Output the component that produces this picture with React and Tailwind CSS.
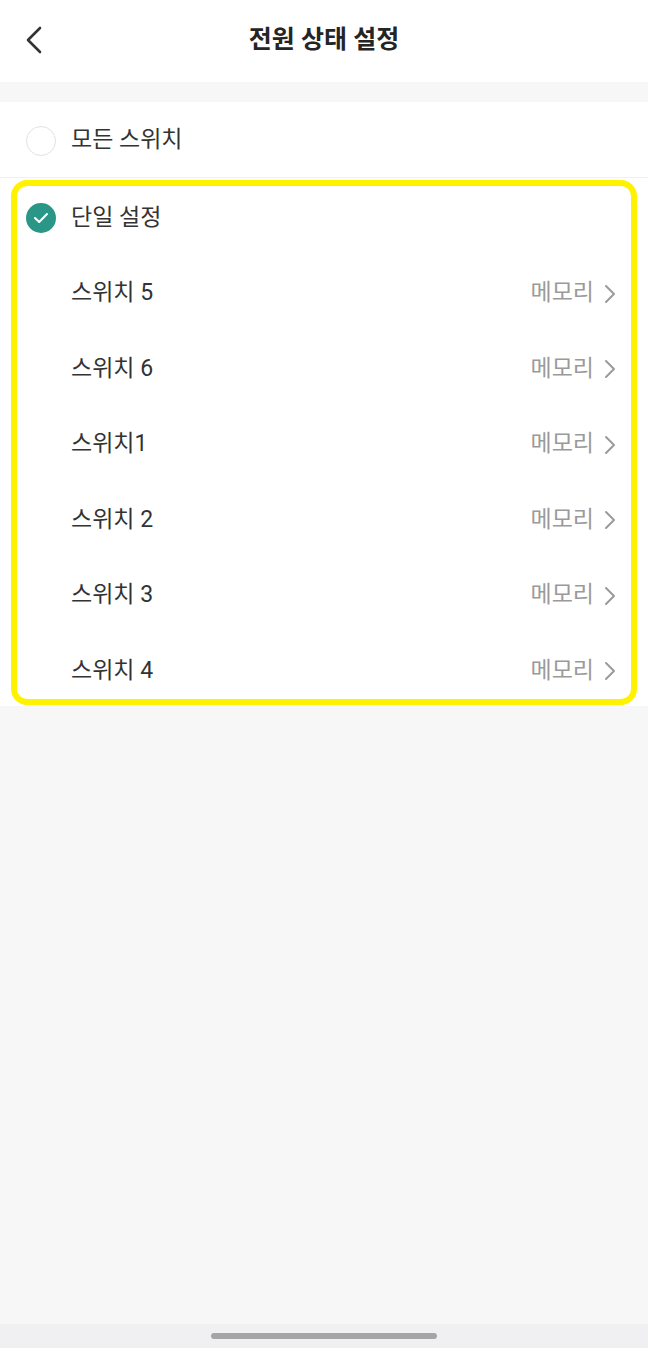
import React from "react";

const Chevron = () => (
  <svg width="12" height="20" viewBox="0 0 12 20" fill="none">
    <path d="M2 2 L10 10 L2 18" stroke="#9a9a9a" strokeWidth="2" strokeLinecap="round" strokeLinejoin="round" />
  </svg>
);

const rows = ["스위치 5", "스위치 6", "스위치1", "스위치 2", "스위치 3", "스위치 4"];

export default function App() {
  return (
    <div
      className="flex h-screen flex-col bg-[#f7f7f7]"
      style={{ fontFamily: 'Roboto, "Noto Sans CJK KR", sans-serif' }}
    >
      <header className="grid h-[82px] grid-cols-[1fr_auto_1fr] items-center bg-white">
        <div className="pl-[24px] pb-[3px]">
          <svg width="20" height="28" viewBox="0 0 20 28" fill="none">
            <path d="M16 2 L4 14 L16 26" stroke="#333" strokeWidth="2.6" strokeLinecap="round" strokeLinejoin="round" />
          </svg>
        </div>
        <h1 className="pb-[3px] text-[25px] font-bold text-[#252525]">전원 상태 설정</h1>
        <div />
      </header>
      <div className="h-[20px]" />
      <section className="bg-white pb-[1px]">
        <div className="flex h-[75px] items-center gap-[15px] pl-[26px] pt-[2px]">
          <span className="h-[30px] w-[30px] rounded-full border-[1.5px] border-[#e2e2e2]" />
          <span className="text-[23px] text-[#333]">모든 스위치</span>
        </div>
        <div className="h-px bg-[#f0f0f0]" />
        <div className="mx-[11px] mt-[2px] flex flex-col gap-[31.5px] rounded-[16px] border-[6px] border-[#fff200] pt-[10px] pb-[6px]">
          <div className="flex h-[44px] items-center gap-[15px] pl-[9px]">
            <span className="flex h-[30px] w-[30px] items-center justify-center rounded-full bg-[#2a9688]">
              <svg width="16" height="12" viewBox="0 0 16 12" fill="none">
                <path d="M2 6 L6.2 10 L14 2" stroke="white" strokeWidth="2" strokeLinecap="round" strokeLinejoin="round" />
              </svg>
            </span>
            <span className="text-[23px] text-[#333]">단일 설정</span>
          </div>
          {rows.map((r) => (
            <div key={r} className="flex h-[44px] items-center justify-between pl-[54px] pr-[15px]">
              <span className="text-[23px] text-[#333]">{r}</span>
              <span className="flex items-center gap-[10px]">
                <span className="text-[23px] text-[#9a9a9a]">메모리</span>
                <Chevron />
              </span>
            </div>
          ))}
        </div>
      </section>
      <div className="flex-1" />
      <div className="flex h-[24px] items-center justify-center bg-[#f0f0f2]">
        <div className="h-[6px] w-[226px] rounded-full bg-[#a5a5a5]" />
      </div>
    </div>
  );
}
